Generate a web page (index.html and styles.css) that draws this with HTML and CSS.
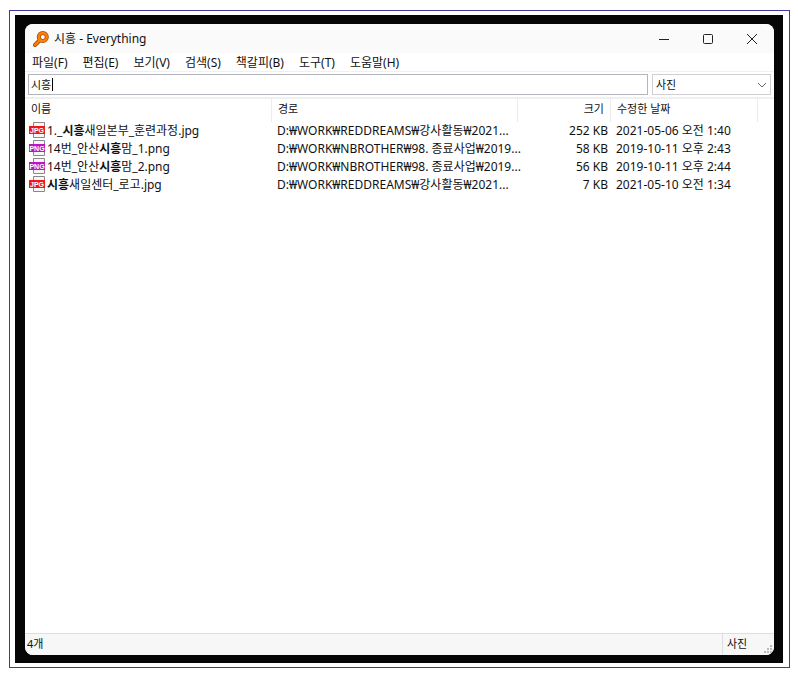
FILE: index.html
```html
<!DOCTYPE html>
<html lang="ko">
<head>
<meta charset="UTF-8" />
<meta name="viewport" content="width=device-width, initial-scale=1" />
<title>시흥 - Everything</title>
<link rel="stylesheet" href="styles.css">
</head>
<body>

<div class="frame">
  <div class="desktop">
    <main class="window">

      <header class="titlebar">
        <svg class="app-icon" viewBox="0 0 16 16">
          <path d="M6 10L2 14" stroke="#a94b08" stroke-width="4" stroke-linecap="round"/>
          <circle cx="9.800" cy="6" r="4" fill="#fff" stroke="#a94b08" stroke-width="4"/>
          <path d="M6.500 9.500L2 14" stroke="#ff8008" stroke-width="2.400" stroke-linecap="round"/>
          <circle cx="9.800" cy="6" r="4" fill="none" stroke="#ff8008" stroke-width="2.400"/>
        </svg>
        <h1>시흥 - Everything</h1>
        <div class="controls">
          <button type="button" aria-label="최소화"><svg viewBox="0 0 12 12"><path d="M1 6.500h10"/></svg></button>
          <button type="button" aria-label="최대화"><svg viewBox="0 0 12 12"><rect x="1.500" y="1.500" width="9" height="9" rx="1"/></svg></button>
          <button type="button" aria-label="닫기"><svg viewBox="0 0 12 12"><path d="M1 1l10 10M11 1L1 11"/></svg></button>
        </div>
      </header>

      <nav class="menu">
        <button type="button">파일(F)</button>
        <button type="button">편집(E)</button>
        <button type="button">보기(V)</button>
        <button type="button">검색(S)</button>
        <button type="button">책갈피(B)</button>
        <button type="button">도구(T)</button>
        <button type="button">도움말(H)</button>
      </nav>

      <div class="search">
        <div class="search-box">
          <input type="text" value="시흥" aria-label="검색">
          <span class="caret"></span>
        </div>
        <div class="filter">
          <select aria-label="필터">
            <option>사진</option>
          </select>
          <svg viewBox="0 0 10 6"><path d="M1 1l4 4 4-4"/></svg>
        </div>
      </div>

      <div class="results">
        <table>
          <colgroup>
            <col class="col-name">
            <col class="col-path">
            <col class="col-size">
            <col class="col-date">
            <col>
          </colgroup>
          <thead>
            <tr><th>이름</th><th>경로</th><th class="size">크기</th><th>수정한 날짜</th><td></td></tr>
          </thead>
          <tbody>
            <tr>
              <td class="name"><svg class="jpg" viewBox="0 0 16 16"><path class="sheet" d="M4.500 .5h11v15h-11z"/><path class="band" d="M0 4h16v8H0z"/><text x="8" y="10.500">JPG</text></svg>1._<b>시흥</b>새일본부_훈련과정.jpg</td>
              <td>D:₩WORK₩REDDREAMS₩강사활동₩2021...</td>
              <td class="size">252 KB</td>
              <td>2021-05-06 오전 1:40</td>
              <td></td>
            </tr>
            <tr>
              <td class="name"><svg class="png" viewBox="0 0 16 16"><path class="sheet" d="M4.500 .5h11v15h-11z"/><path class="band" d="M0 4h16v8H0z"/><text x="8" y="10.500">PNG</text></svg>14번_안산<b>시흥</b>맘_1.png</td>
              <td>D:₩WORK₩NBROTHER₩98. 종료사업₩2019...</td>
              <td class="size">58 KB</td>
              <td>2019-10-11 오후 2:43</td>
              <td></td>
            </tr>
            <tr>
              <td class="name"><svg class="png" viewBox="0 0 16 16"><path class="sheet" d="M4.500 .5h11v15h-11z"/><path class="band" d="M0 4h16v8H0z"/><text x="8" y="10.500">PNG</text></svg>14번_안산<b>시흥</b>맘_2.png</td>
              <td>D:₩WORK₩NBROTHER₩98. 종료사업₩2019...</td>
              <td class="size">56 KB</td>
              <td>2019-10-11 오후 2:44</td>
              <td></td>
            </tr>
            <tr>
              <td class="name"><svg class="jpg" viewBox="0 0 16 16"><path class="sheet" d="M4.500 .5h11v15h-11z"/><path class="band" d="M0 4h16v8H0z"/><text x="8" y="10.500">JPG</text></svg><b>시흥</b>새일센터_로고.jpg</td>
              <td>D:₩WORK₩REDDREAMS₩강사활동₩2021...</td>
              <td class="size">7 KB</td>
              <td>2021-05-10 오전 1:34</td>
              <td></td>
            </tr>
          </tbody>
        </table>
      </div>

      <footer class="status">
        <span class="count">4개</span>
        <span class="status-filter">사진</span>
        <svg class="grip" viewBox="0 0 8 8"><path d="M6 0h2v2H6zM3 3h2v2H3zM6 3h2v2H6zM0 6h2v2H0zM3 6h2v2H3zM6 6h2v2H6z"/></svg>
      </footer>

    </main>
  </div>
</div>

</body>
</html>
```

FILE: styles.css
```css
* {
  box-sizing: border-box;
}
body {
  margin: 0;
  padding: 10px 8px 10px 9px;
  min-height: 100vh;
  display: flex;
  background: #fff;
  color: #111;
  font-family: "Noto Sans", "Noto Sans CJK KR", sans-serif;
  font-size: 12px;
  line-height: 18px;
}
button, input, select {
  font: inherit;
  color: inherit;
  margin: 0;
  padding: 0;
  border: 0;
  background: none;
}
.frame {
  flex: 1;
  display: flex;
  border: 1px solid #3f3a9b;
  padding: 4px 6px 4px 5px;
}
.desktop {
  flex: 1;
  display: flex;
  background: #060606;
  padding: 9px 9px 8px 10px;
}
.window {
  flex: 1;
  min-width: 0;
  display: flex;
  flex-direction: column;
  background: #fff;
  border-radius: 8px;
  overflow: hidden;
}

/* Barra de título */
.titlebar {
  display: flex;
  align-items: center;
  height: 29px;
  padding-left: 8px;
  background: #fafafa;
}
.app-icon {
  width: 16px;
  height: 16px;
}
.titlebar h1 {
  flex: 1;
  margin: 0 0 0 5px;
  font-size: 12px;
  font-weight: 400;
}
.controls {
  display: flex;
}
.controls button {
  width: 44px;
  height: 28px;
}
.controls svg {
  display: block;
  width: 12px;
  height: 12px;
  margin: auto;
  fill: none;
  stroke: #222;
}

.menu {
  display: flex;
  align-items: flex-end;
  gap: 15px;
  height: 19px;
  padding-left: 7px;
  border-bottom: 1px solid #f0f0f0;
}
.menu button {
  line-height: 16px;
}

/* Búsqueda y filtro */
.search {
  display: flex;
  gap: 4px;
  padding: 2px 3px;
  border-bottom: 2px solid #efefef;
  font-size: 11px;
}
.search-box {
  flex: 1;
  display: flex;
  align-items: center;
  height: 21px;
  padding-left: 2px;
  border: 1px solid #b4b4bc;
}
.search-box input {
  width: 21px;
  outline: 0;
}
.caret {
  width: 1px;
  height: 13px;
  background: #000;
}
.filter {
  position: relative;
  width: 119px;
  height: 21px;
  border: 1px solid #d0d0d4;
}
.filter select {
  display: block;
  width: 100%;
  height: 19px;
  padding-left: 3px;
  appearance: none;
}
.filter svg {
  position: absolute;
  right: 3px;
  top: 7px;
  width: 10px;
  height: 6px;
  fill: none;
  stroke: #666;
  pointer-events: none;
}

/* Lista de resultados */
.results {
  flex: 1;
}
table {
  width: 100%;
  table-layout: fixed;
  border-collapse: separate;
  border-spacing: 0;
}
.col-name { width: 247px; }
.col-path { width: 246px; }
.col-size { width: 93px; }
.col-date { width: 147px; }
th {
  height: 23px;
  padding: 0 6px 4px;
  border-right: 1px solid #ececec;
  font-size: 11px;
  font-weight: 400;
  text-align: left;
}
td {
  height: 18px;
  padding: 0 0 0 5px;
  white-space: nowrap;
}
.size {
  text-align: right;
}
td.size {
  padding-right: 3px;
}
td.name {
  padding-left: 4px;
}
.name svg {
  width: 16px;
  height: 16px;
  margin-right: 2px;
  vertical-align: top;
}
.name text {
  fill: #fff;
  font: bold 7px "Liberation Sans", sans-serif;
  text-anchor: middle;
}
.sheet {
  fill: #f6f6f6;
  stroke: #888;
}
.jpg .band { fill: #f01818; }
.png .band { fill: #bd14c6; }

.status {
  display: flex;
  height: 22px;
  background: #f7f7f7;
  border-top: 1px solid #dedede;
  font-size: 11px;
  line-height: 20px;
}
.count {
  flex: 1;
  padding-left: 2px;
}
.status-filter {
  width: 42px;
  padding-left: 4px;
  border-left: 1px solid #dedede;
}
.grip {
  align-self: flex-end;
  width: 8px;
  height: 8px;
  margin: 0 2px 2px 0;
  fill: #bbb;
}
```
